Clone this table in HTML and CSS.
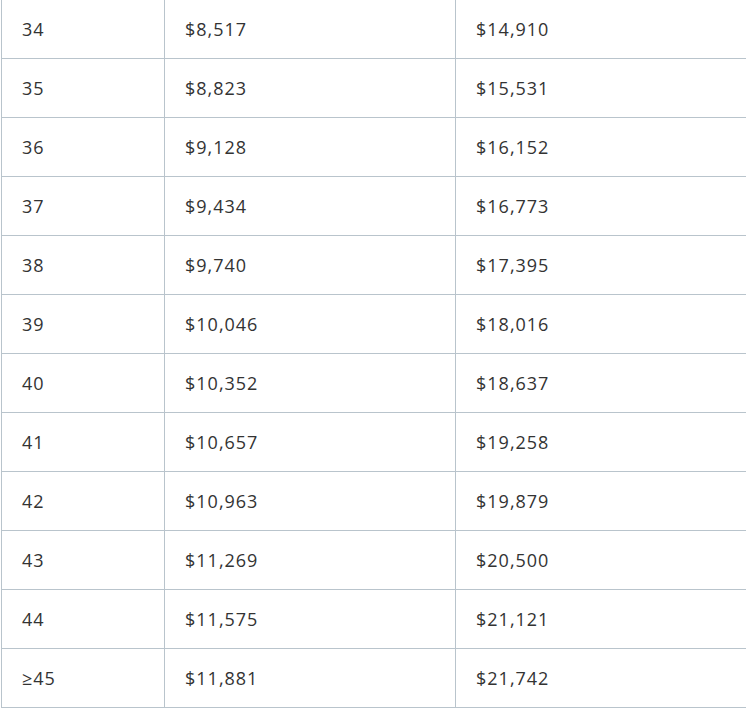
FILE: index.html
```html
<!DOCTYPE html>
<html>
<head>
<meta charset="utf-8">
<link rel="stylesheet" href="styles.css">
</head>
<body>
<table class="rates">
<colgroup><col class="c1"><col class="c2"><col class="c3"></colgroup>
<tbody>
<tr><td>34</td><td>$8,517</td><td>$14,910</td></tr>
<tr><td>35</td><td>$8,823</td><td>$15,531</td></tr>
<tr><td>36</td><td>$9,128</td><td>$16,152</td></tr>
<tr><td>37</td><td>$9,434</td><td>$16,773</td></tr>
<tr><td>38</td><td>$9,740</td><td>$17,395</td></tr>
<tr><td>39</td><td>$10,046</td><td>$18,016</td></tr>
<tr><td>40</td><td>$10,352</td><td>$18,637</td></tr>
<tr><td>41</td><td>$10,657</td><td>$19,258</td></tr>
<tr><td>42</td><td>$10,963</td><td>$19,879</td></tr>
<tr><td>43</td><td>$11,269</td><td>$20,500</td></tr>
<tr><td>44</td><td>$11,575</td><td>$21,121</td></tr>
<tr><td>≥45</td><td>$11,881</td><td>$21,742</td></tr>
</tbody>
</table>
</body>
</html>
```

FILE: styles.css
```css
html, body {
  margin: 0;
  padding: 0;
  background: #ffffff;
}
.rates {
  border-collapse: collapse;
  margin: -1px 0 0 1px;
  width: 745px;
  table-layout: fixed;
  font-family: "Open Sans", sans-serif;
  font-size: 18px;
  letter-spacing: 1px;
  color: #333333;
}
.c1 { width: 163px; }
.c2 { width: 291px; }
.c3 { width: 291px; }
.rates td {
  border: 1px solid #b9c4cc;
  padding: 17px 20px 17px 20px;
  line-height: 24px;
  height: 24px;
  text-align: left;
  vertical-align: top;
}
```
